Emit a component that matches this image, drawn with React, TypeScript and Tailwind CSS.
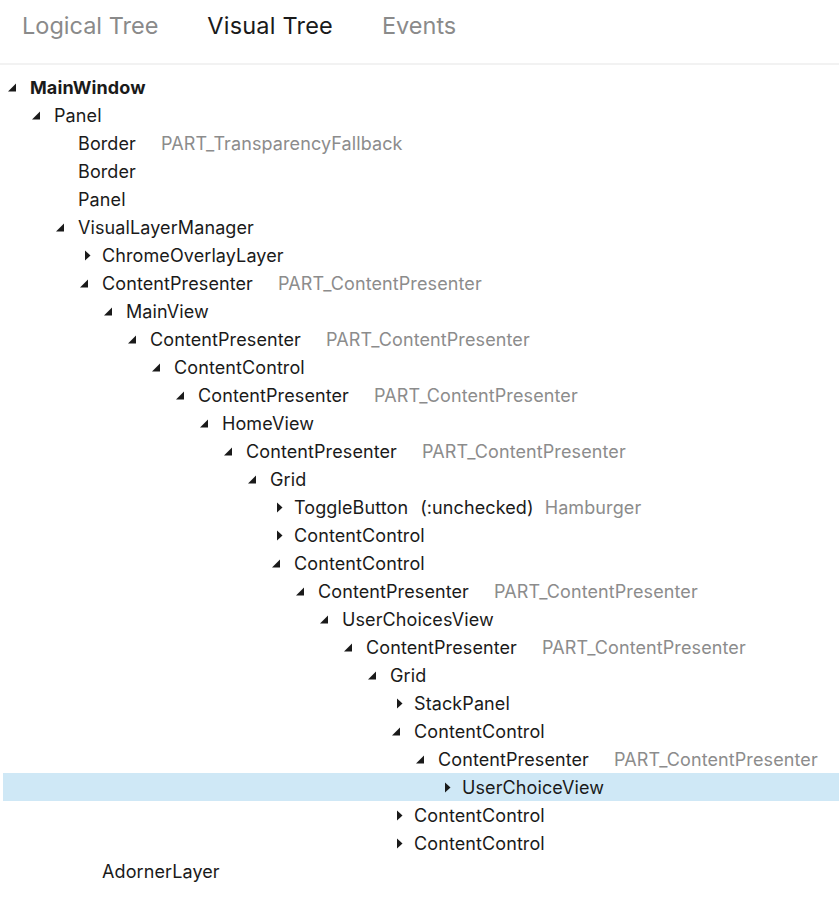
import React from "react";

type Row = {
  level: number;
  arrow: "exp" | "col" | "none";
  name: string;
  part?: string;
  pseudo?: string;
  bold?: boolean;
  selected?: boolean;
};

const P = "PART_ContentPresenter";

const rows: Row[] = [
  { level: 0, arrow: "exp", name: "MainWindow", bold: true },
  { level: 1, arrow: "exp", name: "Panel" },
  { level: 2, arrow: "none", name: "Border", part: "PART_TransparencyFallback" },
  { level: 2, arrow: "none", name: "Border" },
  { level: 2, arrow: "none", name: "Panel" },
  { level: 2, arrow: "exp", name: "VisualLayerManager" },
  { level: 3, arrow: "col", name: "ChromeOverlayLayer" },
  { level: 3, arrow: "exp", name: "ContentPresenter", part: P },
  { level: 4, arrow: "exp", name: "MainView" },
  { level: 5, arrow: "exp", name: "ContentPresenter", part: P },
  { level: 6, arrow: "exp", name: "ContentControl" },
  { level: 7, arrow: "exp", name: "ContentPresenter", part: P },
  { level: 8, arrow: "exp", name: "HomeView" },
  { level: 9, arrow: "exp", name: "ContentPresenter", part: P },
  { level: 10, arrow: "exp", name: "Grid" },
  { level: 11, arrow: "col", name: "ToggleButton", pseudo: "(:unchecked)", part: "Hamburger" },
  { level: 11, arrow: "col", name: "ContentControl" },
  { level: 11, arrow: "exp", name: "ContentControl" },
  { level: 12, arrow: "exp", name: "ContentPresenter", part: P },
  { level: 13, arrow: "exp", name: "UserChoicesView" },
  { level: 14, arrow: "exp", name: "ContentPresenter", part: P },
  { level: 15, arrow: "exp", name: "Grid" },
  { level: 16, arrow: "col", name: "StackPanel" },
  { level: 16, arrow: "exp", name: "ContentControl" },
  { level: 17, arrow: "exp", name: "ContentPresenter", part: P },
  { level: 18, arrow: "col", name: "UserChoiceView", selected: true },
  { level: 16, arrow: "col", name: "ContentControl" },
  { level: 16, arrow: "col", name: "ContentControl" },
  { level: 3, arrow: "none", name: "AdornerLayer" },
];

function Arrow({ kind }: { kind: Row["arrow"] }) {
  return (
    <span className="w-[24px] h-[28px] flex items-center shrink-0">
      {kind === "exp" && (
        <svg width="24" height="28" viewBox="0 0 24 28">
          <polygon points="2,18.5 10,18.5 10,10.5" fill="#1a1a1a" />
        </svg>
      )}
      {kind === "col" && (
        <svg width="24" height="28" viewBox="0 0 24 28">
          <polygon points="7,9.5 12.5,14.5 7,19.5" fill="#1a1a1a" />
        </svg>
      )}
    </span>
  );
}

export default function App() {
  return (
    <div
      className="w-[839px] h-[919px] bg-white overflow-hidden"
      style={{ fontFamily: "Inter, 'Noto Sans', sans-serif" }}
    >
      <div className="h-[65px] border-b-2 border-[#f2f2f2] flex items-start pt-[9px] pl-[22px] gap-[49px] text-[23.5px] leading-[34px]">
        <span className="text-[#8a8a8a]">Logical Tree</span>
        <span className="text-[#1a1a1a] tracking-[0.2px]">Visual Tree</span>
        <span className="text-[#8a8a8a]">Events</span>
      </div>
      <div className="pt-[8px] pl-[3px]">
        {rows.map((r, i) => (
          <div
            key={i}
            className={
              "h-[28px] flex items-center text-[18px] tracking-[0.1px] whitespace-nowrap " +
              (r.selected ? "bg-[#cfe8f6]" : "")
            }
          >
            <span style={{ width: 3 + r.level * 24 }} className="shrink-0" />
            <Arrow kind={r.arrow} />
            <span className={(r.bold ? "font-bold " : "") + "text-[#1a1a1a]"}>{r.name}</span>
            {r.pseudo && <span className="ml-[12px] text-[#1a1a1a]">{r.pseudo}</span>}
            {r.part && (
              <span className={(r.pseudo ? "ml-[11px] " : "ml-[25px] ") + "text-[#8c8c8c]"}>{r.part}</span>
            )}
          </div>
        ))}
      </div>
    </div>
  );
}
